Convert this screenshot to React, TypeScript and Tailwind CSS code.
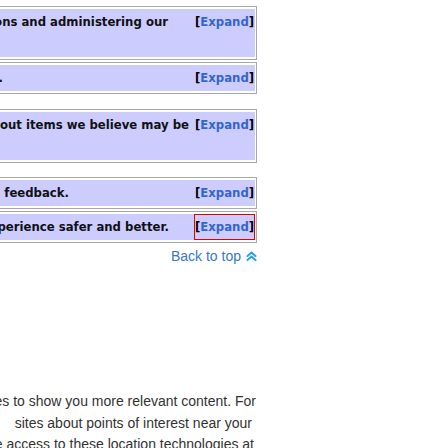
import React from 'react';

type Line = { text: string; pr?: string };
type Row = { lines: Line[]; gap: string; focused?: boolean };

const rows: Row[] = [
  {
    gap: 'mt-0',
    lines: [
      { text: 'improving our operations and administering our', pr: 'pr-[27px]' },
      { text: 'services.' },
    ],
  },
  {
    gap: 'mt-[2px]',
    lines: [{ text: 'to keep our services secure.', pr: 'pr-[192px]' }],
  },
  {
    gap: 'mt-[15px]',
    lines: [
      { text: 'to send you messages about items we believe may be', pr: 'pr-[6px]' },
      { text: 'of interest.' },
    ],
  },
  {
    gap: 'mt-[14px]',
    lines: [{ text: 'Help us improve by sending feedback.', pr: 'pr-[126px]' }],
  },
  {
    gap: 'mt-[2px]',
    focused: true,
    lines: [{ text: 'These tools make your experience safer and better.', pr: 'pr-[26px]' }],
  },
];

const paragraph: Line[] = [
  { text: 'We use location technologies to show you more relevant content. For', pr: 'pr-[1px]' },
  { text: 'sites about points of interest near your', pr: 'pr-[5px]' },
  { text: 'You can manage access to these location technologies at', pr: 'pr-[3px]' },
];

const ChevronsUp = () => (
  <svg width="11" height="10" viewBox="0 0 11 10" fill="none" stroke="#29a3e6" strokeWidth="2" strokeLinecap="round" strokeLinejoin="round">
    <polyline points="1.5,5 5.5,1.5 9.5,5" />
    <polyline points="1.5,9 5.5,5.5 9.5,9" />
  </svg>
);

const PolicyRow: React.FC<{ row: Row }> = ({ row }) => (
  <div className={`${row.gap} border border-[#a8a8a8] bg-white pt-[2px] pb-[2px] pl-[2px] pr-[1px]`}>
    <div className="flex items-start bg-[#ccccff]">
      <div className="min-w-0 flex-1 py-[2px] pl-[3px] leading-[22px]">
        {row.lines.map((line, i) => (
          <div key={i} className={`whitespace-nowrap ${line.pr ? `text-right ${line.pr}` : 'text-left'}`}>
            {line.text}
          </div>
        ))}
      </div>
      <div className="w-[60px] shrink-0 pt-[1px] pr-[1px]">
        <a
          href="#"
          className={`block whitespace-nowrap py-[1px] leading-[22px] ${row.focused ? 'outline-1 outline-[#e00000]' : ''}`}
        >
          <span className="text-black">[</span>
          <span className="text-[#3366cc]">Expand</span>
          <span className="text-black">]</span>
        </a>
      </div>
    </div>
  </div>
);

export default function App() {
  return (
    <div className="h-[448px] w-[448px] overflow-hidden bg-white">
      <div className="-ml-[344px] w-[601px] pt-[6px]">
        <div className="font-['DejaVu_Sans',Verdana,sans-serif] text-[11.7px] font-bold text-[#111]">
          {rows.map((row, i) => (
            <PolicyRow key={i} row={row} />
          ))}
        </div>

        <div className="mt-[3px] flex items-center justify-end gap-[5px] font-['Liberation_Sans',Arial,sans-serif] text-[14px] leading-[20px] text-[#3b76cc]">
          <a href="#">Back to top</a>
          <ChevronsUp />
        </div>

        <div className="mt-[125px] font-['Liberation_Sans',Arial,sans-serif] text-[14px] leading-[21.5px] text-[#333]">
          {paragraph.map((line, i) => (
            <div key={i} className={`whitespace-nowrap text-right ${line.pr}`}>
              {line.text}
            </div>
          ))}
        </div>
      </div>
    </div>
  );
}
